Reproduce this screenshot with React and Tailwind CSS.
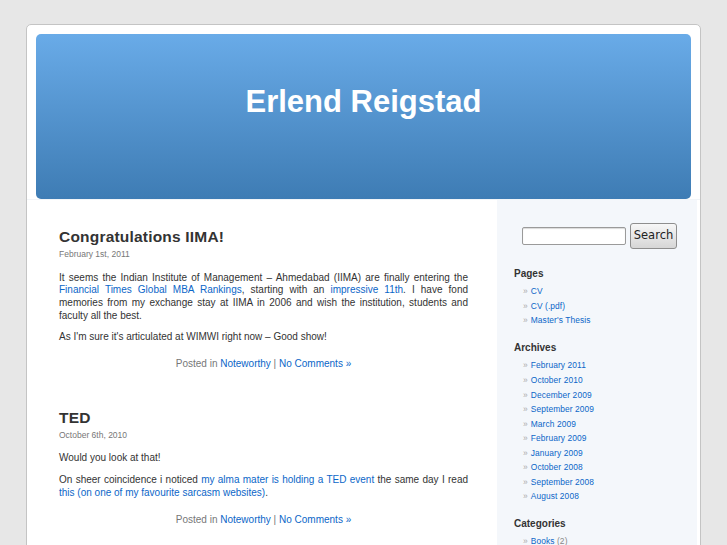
const pages = ['CV', 'CV (.pdf)', "Master's Thesis"];

const archives = [
  'February 2011',
  'October 2010',
  'December 2009',
  'September 2009',
  'March 2009',
  'February 2009',
  'January 2009',
  'October 2008',
  'September 2008',
  'August 2008',
];

const A = ({ children }) => <a className="text-[#0b66c8] no-underline">{children}</a>;

const PostMeta = () => (
  <p className="text-center text-[10px] leading-[13px] text-[#777]">
    Posted in <A>Noteworthy</A> | <A>No Comments »</A>
  </p>
);

const SideList = ({ items }) => (
  <ul className="mt-[3.4px] pl-[9px]">
    {items.map((item) => (
      <li key={item} className="text-[8.4px] leading-[14.55px] tracking-[0.1px]">
        <span className="mr-[3px] text-[#aaa]">»</span>
        <A>{item}</A>
      </li>
    ))}
  </ul>
);

export default function App() {
  return (
    <div
      className="h-[545px] overflow-hidden bg-[#e7e7e7] pl-[26px] pt-[24px]"
      style={{ fontFamily: '"Liberation Sans", Arial, sans-serif' }}
    >
      <div className="h-[600px] w-[675px] rounded-t-[5px] border border-[#c4c4c4] bg-white px-[9px] pt-[9px]">
        <header className="flex h-[165px] items-start justify-center rounded-[5px] bg-gradient-to-b from-[#69abe8] to-[#3e7cb4]">
          <h1 className="mt-[50px] text-[31px] font-bold leading-[36px] text-white">Erlend Reigstad</h1>
        </header>

        <div className="-mx-[9px] flex border-t border-[#f2f5f8]">
          <main className="w-[470px] pl-[32px] pr-[29px] pt-[27px] text-[#333]">
            <h2 className="text-[15.5px] font-bold leading-[20px] tracking-[0.2px]">Congratulations IIMA!</h2>
            <div className="mt-[1px] text-[8.5px] leading-[12px] text-[#777]">February 1st, 2011</div>
            <p className="mt-[11.5px] text-justify text-[10px] leading-[12.67px]">
              It seems the Indian Institute of Management – Ahmedabad (IIMA) are finally entering the{' '}
              <A>Financial Times Global MBA Rankings</A>, starting with an <A>impressive 11th</A>. I have fond memories
              from my exchange stay at IIMA in 2006 and wish the institution, students and faculty all the best.
            </p>
            <p className="mt-[9px] text-[10px] leading-[12.67px]">As I'm sure it's articulated at WIMWI right now – Good show!</p>
            <div className="mt-[13px]">
              <PostMeta />
            </div>

            <h2 className="mt-[38px] text-[15.5px] font-bold leading-[20px] tracking-[0.2px]">TED</h2>
            <div className="mt-[1.5px] text-[8.5px] leading-[12px] text-[#777]">October 6th, 2010</div>
            <p className="mt-[10.5px] text-[10px] leading-[12.67px]">Would you look at that!</p>
            <p className="mt-[9.3px] text-justify text-[10px] leading-[12.67px]">
              On sheer coincidence i noticed <A>my alma mater is holding a TED event</A> the same day I read{' '}
              <A>this (on one of my favourite sarcasm websites)</A>.
            </p>
            <div className="mt-[13.5px]">
              <PostMeta />
            </div>
          </main>

          <aside className="h-[400px] w-[200px] bg-[#f4f7fb] pl-[17px] pt-[23px] text-[#333]">
            <form className="flex items-center gap-[4px] pl-[8px]">
              <input className="h-[18px] w-[104px] rounded-[2px] border border-[#9a9a9a] bg-white shadow-[inset_0_1px_1px_rgba(0,0,0,0.15)]" />
              <button
                type="button"
                className="h-[26px] w-[47px] rounded-[3px] border border-[#8e8e8e] bg-gradient-to-b from-[#f7f7f7] to-[#d6d6d6] text-[11.5px] text-[#222]"
                style={{ fontFamily: '"DejaVu Sans", sans-serif' }}
              >
                Search
              </button>
            </form>

            <h3 className="mt-[18px] text-[10px] font-bold leading-[14px]">Pages</h3>
            <SideList items={pages} />

            <h3 className="mt-[13px] text-[10px] font-bold leading-[14px]">Archives</h3>
            <SideList items={archives} />

            <h3 className="mt-[13px] text-[10px] font-bold leading-[14px]">Categories</h3>
            <ul className="mt-[3.4px] pl-[9px]">
              <li className="text-[8.4px] leading-[14.55px] tracking-[0.1px]">
                <span className="mr-[3px] text-[#aaa]">»</span>
                <A>Books</A> <span className="text-[#888]">(2)</span>
              </li>
            </ul>
          </aside>
        </div>
      </div>
    </div>
  );
}
